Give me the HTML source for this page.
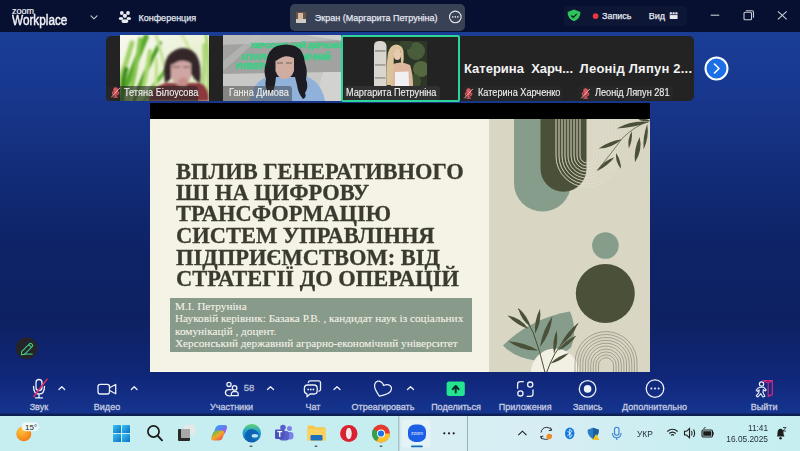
<!DOCTYPE html>
<html><head><meta charset="utf-8">
<style>
*{margin:0;padding:0;box-sizing:border-box}
html,body{width:800px;height:451px;overflow:hidden;font-family:"Liberation Sans",sans-serif}
body{position:relative;background:#c6eef0}
#bg{left:0;top:32px;width:800px;height:384px;background:linear-gradient(180deg,#1a3d95 0%,#18388f 15%,#132d7a 35%,#0e2367 55%,#0d2162 75%,#10277a 90%,#15348e 99%,#15348e 99.2%,#0d2052 99.5%,#0d2052 100%)}
.a{position:absolute}
.t{position:absolute;white-space:nowrap;line-height:1}
#top{left:0;top:0;width:800px;height:32px;background:#071030}
#strip{left:106px;top:36px;width:588px;height:65px;background:#232323;border-radius:5px;overflow:hidden}
#slide{left:150px;top:103px;width:500px;height:269px;background:#000;overflow:hidden}
#tb{left:0;top:416px;width:800px;height:35px;background:#c6eef0}
.s9{font-size:9px;color:#e4e7f0;-webkit-text-stroke:.25px #e4e7f0}
.lbl{position:absolute;width:100px;text-align:center;font-size:9px;color:#c6cce0;line-height:1;top:402.7px;white-space:nowrap;-webkit-text-stroke:.3px #c6cce0}
.title{position:absolute;left:175.5px;font-family:"Liberation Serif",serif;font-weight:bold;font-size:23px;line-height:1;color:#3a3a30;white-space:nowrap;transform:scaleX(.977);transform-origin:0 0;-webkit-text-stroke:.3px #3a3a30}
.info{position:absolute;left:175px;font-family:"Liberation Serif",serif;font-size:11.25px;line-height:1;color:#f6f4ea;white-space:nowrap;-webkit-text-stroke:.08px #f6f4ea}
.tl{position:absolute;background:rgba(40,40,40,.85);border-radius:3px;height:14px}
.tn{position:absolute;font-size:10px;color:#ececec;line-height:1;white-space:nowrap;-webkit-text-stroke:.15px #ececec;transform:scaleX(.915);transform-origin:0 0}
.bn{position:absolute;font-size:13px;font-weight:bold;color:#f2f2f2;line-height:1;white-space:nowrap}
</style></head><body>
<div id="bg" class="a"></div>
<!-- TOP BAR -->
<div id="top" class="a"></div>
<div class="t" style="left:12px;top:6.8px;font-size:9px;color:#eceef4;-webkit-text-stroke:.2px #eceef4">zoom</div>
<div class="t" style="left:12px;top:13.3px;font-size:14px;color:#f0f1f6;transform:scaleX(.84);transform-origin:0 0;-webkit-text-stroke:.45px #f0f1f6">Workplace</div>
<div class="t s9" style="left:138.5px;top:13.6px">Конференция</div>
<div class="a" style="left:290px;top:4px;width:175px;height:26.5px;background:#394155;border-radius:5px"></div>
<div class="t s9" style="left:314.8px;top:13.6px">Экран (Маргарита Петруніна)</div>
<div class="a" style="left:564px;top:6px;width:123px;height:20px;background:#0d1634;border-radius:4px"></div>
<div class="t s9" style="left:602px;top:12.1px">Запись</div>
<div class="t s9" style="left:648.7px;top:12.1px">Вид</div>

<!-- VIDEO STRIP -->
<div id="strip" class="a"></div>
<!-- tile1 image -->
<svg class="a" style="left:120px;top:35px" width="89" height="66" viewBox="0 0 89 66">
  <defs>
    <linearGradient id="g1" x1="0" y1="0" x2="1" y2="1"><stop offset="0" stop-color="#f6f8ee"/><stop offset=".5" stop-color="#ecf2d8"/><stop offset="1" stop-color="#d9e8b6"/></linearGradient>
    <filter id="bl1"><feGaussianBlur stdDeviation="0.9"/></filter>
  </defs>
  <rect width="89" height="66" fill="url(#g1)"/>
  <g filter="url(#bl1)" fill="none" stroke-linecap="round">
    <path d="M-2 50 Q6 30 12 8" stroke="#a3d26c" stroke-width="5"/>
    <path d="M0 66 Q12 36 26 2" stroke="#5aa92c" stroke-width="5.5"/>
    <path d="M8 66 Q16 40 20 4" stroke="#86c650" stroke-width="4"/>
    <path d="M14 66 Q22 42 40 8" stroke="#4b9b22" stroke-width="4"/>
    <path d="M20 66 Q26 44 30 16" stroke="#a7d76e" stroke-width="4"/>
    <path d="M24 66 Q34 48 54 26" stroke="#62b232" stroke-width="3.5"/>
    <path d="M32 66 Q38 48 36 24" stroke="#bfe285" stroke-width="3"/>
    <path d="M3 66 Q1 50 6 34" stroke="#3e8e1a" stroke-width="4.5"/>
    <path d="M36 0 Q40 12 44 30" stroke="#c5e39a" stroke-width="3"/>
    <path d="M62 0 Q72 16 80 44" stroke="#cfe6a4" stroke-width="3"/>
    <path d="M80 66 Q86 40 84 10" stroke="#aad774" stroke-width="3.5"/>
    <path d="M88 60 Q90 30 86 0" stroke="#98cd5e" stroke-width="2.5"/>
  </g>
  <g filter="url(#bl1)">
    <path d="M28 66 Q30 52 46 48 L80 48 Q89 52 89 66 Z" fill="#8a393c"/>
    <path d="M45 48 Q42 30 48 21 Q55 13 63 13 Q72 13 77 21 Q82 30 80 48 Q75 46 72 40 L53 40 Q50 46 45 48 Z" fill="#352829"/>
    <path d="M51 27 Q61 22 71 27 L71 42 Q68 50 61 51 Q54 50 51 42 Z" fill="#cfa6a2"/>
    <path d="M50 27 Q60 17 73 26 L72 29 Q62 22 52 30 Z" fill="#352829"/>
    <path d="M52 32 H60 M63 32 H70" stroke="#5a4848" stroke-width="1.1"/>
    <ellipse cx="63" cy="47" rx="5" ry="4.5" fill="#c48f8a"/>
  </g>
</svg>
<!-- tile2 image -->
<svg class="a" style="left:223px;top:35px" width="118" height="66" viewBox="0 0 118 66">
  <defs>
    <filter id="bl2"><feGaussianBlur stdDeviation="0.65"/></filter>
  </defs>
  <rect width="118" height="66" fill="#b9b9b7"/>
  <g filter="url(#bl2)">
    <path d="M-2 -2 L120 -2 L120 6 L-2 10 Z" fill="#bcbcba"/>
    <path d="M-2 10 L120 5 L120 37 L-2 39 Z" fill="#a2a2a1"/>
    <path d="M-2 39 L120 37 L120 68 L-2 68 Z" fill="#c8c8c6"/>
    <path d="M-2 28 L34 -2 L42 -2 L-2 38 Z" fill="#c0c0be" opacity=".5"/>
    <path d="M70 -2 L120 -2 L120 6 Z" fill="#cfcfcd"/>
    <path d="M100 37 L120 37 L120 68 L92 68 Z" fill="#d6d6d4" opacity=".7"/>
  </g>
  <g filter="url(#bl2)" font-family="Liberation Sans" font-weight="bold" fill="#3ccf86" stroke="#3ccf86" stroke-width=".6">
    <text x="0" y="0" font-size="7.2" transform="translate(28,13.2)">ХЕРСОНСЬКИЙ ДЕРЖАВНИЙ</text>
    <text x="0" y="0" font-size="8.4" transform="translate(18,24.6) scale(.85,1)">АГРАРНО-ЕКОНОМІЧНИЙ</text>
    <text x="0" y="0" font-size="8.6" transform="translate(12.5,34.2) scale(.95,1)">УНІВЕРСИТЕТ</text>
  </g>
  <g filter="url(#bl2)">
    <path d="M26 66 Q30 46 46 41 L78 40 Q98 44 102 66 Z" fill="#8fb1da"/>
    <path d="M46 58 Q41 52 43 44 Q40 36 43 28 Q45 14 54 11 Q63 8 72 11 Q81 15 82 28 Q85 36 83 44 Q86 52 82 58 Q84 62 80 64 Q75 58 74 50 L72 42 L53 42 Q52 52 50 56 Q49 60 46 58 Z" fill="#1f1d20"/>
    <path d="M52.5 23 Q61.5 19 71 23 L71 36 Q68 44 61.8 44 Q55.5 44 52.5 36 Z" fill="#cfada0"/>
    <path d="M51 24 Q58 15 66 17 Q72 18 74 25 L70 22 Q62 19 53 26 Z" fill="#1f1d20"/>
    <path d="M54 28 H60 M63 28 H69" stroke="#6a5a55" stroke-width=".9"/>
  </g>
</svg>
<!-- tile3 border + image -->
<div class="a" style="left:340.5px;top:35px;width:119px;height:66.5px;border:2px solid #2fd49b;border-radius:2px"></div>
<svg class="a" style="left:374px;top:41px" width="53" height="45" viewBox="0 0 53 45">
  <defs><filter id="bl3"><feGaussianBlur stdDeviation="0.7"/></filter></defs>
  <rect width="53" height="45" fill="#2c3526"/>
  <g filter="url(#bl3)">
    <circle cx="42" cy="10" r="9" fill="#4a5c3b"/>
    <circle cx="47" cy="28" r="8" fill="#55683f"/>
    <circle cx="40" cy="40" r="7" fill="#3f5032"/>
    <circle cx="32" cy="3" r="6" fill="#36442d"/>
    <path d="M0 5 Q0 0 6 0 Q12 0 12.5 5 L12.5 45 L0 45 Z" fill="#d8d6ce"/>
    <rect x="1" y="9" width="10.5" height="1.8" fill="#9a988f"/>
    <rect x="1" y="23" width="10.5" height="1.8" fill="#a3a199"/>
    <rect x="1" y="36" width="10.5" height="1.8" fill="#a3a199"/>
    <path d="M17 24 Q26 19 36 24 Q39 32 39 45 L17 45 Q15 32 17 24 Z" fill="#dcb79e"/>
    <path d="M21 31 L34.5 30.5 L35 45 L21 45 Z" fill="#f0f0f3"/>
    <path d="M12.5 44 Q12 26 14 12 Q16 4 22 3.5 Q28 3.5 29.5 10 Q30.5 18 28.5 26 L27 21 L26.5 10 L20 10 L19.5 30 Q19 40 17.5 44 Z" fill="#dcc39b"/>
    <ellipse cx="23.3" cy="13.5" rx="3.8" ry="5.5" fill="#e8c9b2"/>
  </g>
</svg>
<!-- labels -->
<div class="tl" style="left:106px;top:86px;width:92px;height:15px;border-radius:0 3px 0 0;background:rgba(40,40,40,.62)"></div>
<div class="tn" style="left:124.4px;top:88.1px">Тетяна Білоусова</div>
<div class="tl" style="left:223px;top:86px;width:69px;height:15px;border-radius:0 3px 0 0;background:rgba(50,50,50,.45)"></div>
<div class="tn" style="left:228.6px;top:88.2px">Ганна Димова</div>
<div class="tl" style="left:344px;top:86px;width:95.5px;height:14px;background:rgba(50,50,50,.9)"></div>
<div class="tn" style="left:345.8px;top:88.2px">Маргарита Петруніна</div>
<div class="bn" style="left:464px;top:61.5px">Катерина&nbsp; Харч...</div>
<div class="tl" style="left:462.5px;top:86px;width:99px"></div>
<div class="tn" style="left:477.5px;top:88.2px">Катерина Харченко</div>
<div class="bn" style="left:579.6px;top:61.5px;letter-spacing:.22px">Леонід Ляпун 2...</div>
<div class="tl" style="left:578.5px;top:86px;width:94.5px"></div>
<div class="tn" style="left:595px;top:88.2px">Леонід Ляпун 281</div>
<!-- muted mic icons in tiles -->
<svg class="a" style="left:110px;top:87px" width="11" height="11" viewBox="0 0 11 11"><g stroke="#e0585c" fill="none" stroke-width="1.2" stroke-linecap="round"><rect x="3.9" y="0.8" width="3.4" height="5.8" rx="1.7" fill="#e0585c"/><path d="M2.4 5 Q2.4 8.2 5.6 8.2 Q8.8 8.2 8.8 5"/><path d="M5.6 8.2 V10.2 M3.8 10.2 H7.4"/></g><path d="M1.6 10 L9.6 1.2" stroke="#f0a8aa" stroke-width="1" stroke-linecap="round"/></svg>
<svg class="a" style="left:463px;top:88px" width="11" height="11" viewBox="0 0 11 11"><g stroke="#e0585c" fill="none" stroke-width="1.2" stroke-linecap="round"><rect x="3.9" y="0.8" width="3.4" height="5.8" rx="1.7" fill="#e0585c"/><path d="M2.4 5 Q2.4 8.2 5.6 8.2 Q8.8 8.2 8.8 5"/><path d="M5.6 8.2 V10.2 M3.8 10.2 H7.4"/></g><path d="M1.6 10 L9.6 1.2" stroke="#f0a8aa" stroke-width="1" stroke-linecap="round"/></svg>
<svg class="a" style="left:580px;top:88px" width="11" height="11" viewBox="0 0 11 11"><g stroke="#e0585c" fill="none" stroke-width="1.2" stroke-linecap="round"><rect x="3.9" y="0.8" width="3.4" height="5.8" rx="1.7" fill="#e0585c"/><path d="M2.4 5 Q2.4 8.2 5.6 8.2 Q8.8 8.2 8.8 5"/><path d="M5.6 8.2 V10.2 M3.8 10.2 H7.4"/></g><path d="M1.6 10 L9.6 1.2" stroke="#f0a8aa" stroke-width="1" stroke-linecap="round"/></svg>
<!-- next arrow -->
<svg class="a" style="left:704px;top:56px" width="25" height="25" viewBox="0 0 25 25"><circle cx="12.5" cy="12.5" r="11" fill="#1d6fe6" stroke="#fff" stroke-width="2"/><path d="M10.5 8 L15 12.5 L10.5 17" fill="none" stroke="#fff" stroke-width="1.6" stroke-linecap="round" stroke-linejoin="round"/></svg>

<!-- SLIDE -->
<div id="slide" class="a">
  <div class="a" style="left:0;top:15.5px;width:339px;height:253.5px;background:#f5f3e5"></div>
  </div>
<div class="a" style="left:150px;top:371px;width:500px;height:1px;background:#fbfaf3;z-index:0"></div>
<!-- DECO -->
<svg class="a" style="left:489px;top:118.5px" width="161" height="253.5" viewBox="489 118.5 161 253.5">
<defs><clipPath id="darkc"><path d="M540.5 110 V168.3 A23 23 0 0 0 586.5 168.3 V110 Z"/></clipPath></defs>
<rect x="489" y="118.5" width="161" height="253.5" fill="#d9d6c4"/>
<path d="M514 110 V182.5 A28.5 28.5 0 0 0 571 182.5 V110 Z" fill="#879d8c"/>
<path d="M540.5 110 V168.3 A23 23 0 0 0 586.5 168.3 V110 Z" fill="#4b5039"/>
<path d="M580.0 110 V155.5 A7.0 7.0 0 0 0 594.0 155.5 V110 M577.0 110 V155.5 A10.0 10.0 0 0 0 597.0 155.5 V110 M574.0 110 V155.5 A13.0 13.0 0 0 0 600.0 155.5 V110 M571.0 110 V155.5 A16.0 16.0 0 0 0 603.0 155.5 V110 M568.0 110 V155.5 A19.0 19.0 0 0 0 606.0 155.5 V110 M565.0 110 V155.5 A22.0 22.0 0 0 0 609.0 155.5 V110 M562.0 110 V155.5 A25.0 25.0 0 0 0 612.0 155.5 V110 M559.0 110 V155.5 A28.0 28.0 0 0 0 615.0 155.5 V110 M556.0 110 V155.5 A31.0 31.0 0 0 0 618.0 155.5 V110" fill="none" stroke="#efece0" stroke-width="0.6" opacity="0.55"/>
<path d="M580.0 110 V155.5 A7.0 7.0 0 0 0 594.0 155.5 V110 M577.0 110 V155.5 A10.0 10.0 0 0 0 597.0 155.5 V110 M574.0 110 V155.5 A13.0 13.0 0 0 0 600.0 155.5 V110 M571.0 110 V155.5 A16.0 16.0 0 0 0 603.0 155.5 V110 M568.0 110 V155.5 A19.0 19.0 0 0 0 606.0 155.5 V110 M565.0 110 V155.5 A22.0 22.0 0 0 0 609.0 155.5 V110 M562.0 110 V155.5 A25.0 25.0 0 0 0 612.0 155.5 V110 M559.0 110 V155.5 A28.0 28.0 0 0 0 615.0 155.5 V110 M556.0 110 V155.5 A31.0 31.0 0 0 0 618.0 155.5 V110" fill="none" stroke="#e4e0c8" stroke-width="0.7" clip-path="url(#darkc)"/>
<path d="M650 120 Q634 126 622 138 Q612 152 597 170" fill="none" stroke="#4b5039" stroke-width="0.7"/>
<path d="M649.4 121.5 Q632.0 119.4 616.7 128.0 Q633.5 127.2 649.4 121.5Z" fill="#4b5039"/>
<path d="M621.7 138.8 Q609.1 140.7 598.6 148.0 Q612.0 148.0 621.7 138.8Z" fill="#4b5039"/>
<path d="M631.8 130.8 Q627.0 138.8 628.9 148.0 Q632.7 139.8 631.8 130.8Z" fill="#4b5039"/>
<path d="M639.7 136.6 Q633.5 148.5 635.0 161.8 Q642.7 150.2 639.7 136.6Z" fill="#4b5039"/>
<path d="M647.3 123.4 Q642.6 135.8 643.6 149.0 Q649.3 136.8 647.3 123.4Z" fill="#4b5039"/>
<path d="M616.0 152.5 Q615.1 161.5 621.0 168.3 Q620.9 159.6 616.0 152.5Z" fill="#4b5039"/>
<path d="M614.5 156.8 Q603.0 160.0 597.2 170.5 Q607.5 165.7 614.5 156.8Z" fill="#4b5039"/>
<path d="M638.0 119.0 Q643.8 121.7 650.0 120.0 Q644.2 117.3 638.0 119.0Z" fill="#4b5039"/>
<circle cx="605.4" cy="245" r="13.3" fill="#879d8c"/>
<circle cx="605.3" cy="293" r="29.5" fill="#4b5039"/>
<path d="M503 345 Q530 318 570 311 Q578 330 571 347 Q556 361 535 360 Q514 357 503 345 Z" fill="#879d8c"/>
<circle cx="555" cy="372" r="24" fill="#f2f0e3"/>
<path d="M598.5 380 V364.7 A7.5 7.5 0 0 1 613.5 364.7 V380 M595.9 380 V364.4 A10.1 10.1 0 0 1 616.1 364.4 V380 M593.3 380 V364.1 A12.7 12.7 0 0 1 618.7 364.1 V380 M590.7 380 V363.8 A15.3 15.3 0 0 1 621.3 363.8 V380 M588.1 380 V363.5 A17.9 17.9 0 0 1 623.9 363.5 V380 M585.5 380 V363.2 A20.5 20.5 0 0 1 626.5 363.2 V380 M582.8 380 V363.0 A23.2 23.2 0 0 1 629.2 363.0 V380 M580.2 380 V362.7 A25.8 25.8 0 0 1 631.8 362.7 V380 M577.6 380 V362.4 A28.4 28.4 0 0 1 634.4 362.4 V380 M575.0 380 V362.1 A31.0 31.0 0 0 1 637.0 362.1 V380" fill="none" stroke="#7d7b6c" stroke-width="0.6"/>
<path d="M545 372 Q540 350 533 331.6 Q526 318 518.3 308.3 M546.6 372 Q550 362 555 353 Q566 336 578 323" fill="none" stroke="#4b5039" stroke-width="1"/>
<path d="M528.3 328.3 Q520.7 317.3 507.5 315.0 Q516.2 324.3 528.3 328.3Z" fill="#4b5039"/>
<path d="M530.8 326.6 Q527.4 315.2 518.3 307.5 Q520.8 319.5 530.8 326.6Z" fill="#4b5039"/>
<path d="M535.0 333.3 Q541.9 321.7 540.0 308.3 Q534.1 320.1 535.0 333.3Z" fill="#4b5039"/>
<path d="M540.0 346.6 Q550.8 333.1 552.4 315.8 Q542.5 329.7 540.0 346.6Z" fill="#4b5039"/>
<path d="M538.3 350.0 Q524.4 341.9 508.3 340.8 Q521.6 350.8 538.3 350.0Z" fill="#4b5039"/>
<path d="M554.0 353.3 Q558.9 342.0 556.6 330.0 Q551.7 341.3 554.0 353.3Z" fill="#4b5039"/>
<path d="M560.0 345.0 Q572.6 336.6 578.2 322.5 Q566.4 331.6 560.0 345.0Z" fill="#4b5039"/>
<path d="M558.0 350.0 Q569.5 345.3 576.5 335.0 Q565.0 339.7 558.0 350.0Z" fill="#4b5039"/>
<path d="M550.0 363.2 Q561.1 360.6 569.0 352.4 Q557.9 355.0 550.0 363.2Z" fill="#4b5039"/>
</svg>
<!-- /DECO -->
<div class="title" style="top:159.8px">ВПЛИВ ГЕНЕРАТИВНОГО</div>
<div class="title" style="top:181.1px">ШІ НА ЦИФРОВУ</div>
<div class="title" style="top:202.4px">ТРАНСФОРМАЦІЮ</div>
<div class="title" style="top:224.0px">СИСТЕМ УПРАВЛІННЯ</div>
<div class="title" style="top:245.5px">ПІДПРИЄМСТВОМ: ВІД</div>
<div class="title" style="top:266.9px">СТРАТЕГІЇ ДО ОПЕРАЦІЙ</div>
<div class="a" style="left:169.5px;top:297.6px;width:302.5px;height:54px;background:#889a89"></div>
<div class="info" style="top:300.6px">М.І. Петруніна</div>
<div class="info" style="top:313.1px">Науковій керівник: Базака Р.В. , кандидат наук із соціальних</div>
<div class="info" style="top:325.7px">комунікацій , доцент.</div>
<div class="info" style="top:338.2px">Херсонський державний аграрно-економічний університет</div>

<!-- TOOLBAR LABELS -->
<div class="lbl" style="left:-11.1px">Звук</div>
<div class="lbl" style="left:57px">Видео</div>
<div class="lbl" style="left:181.6px">Участники</div>
<div class="t" style="left:243.8px;top:383.4px;font-size:9.5px;color:#b4bcd4;-webkit-text-stroke:.3px #b4bcd4">58</div>
<div class="lbl" style="left:263px">Чат</div>
<div class="lbl" style="left:333px">Отреагировать</div>
<div class="lbl" style="left:406px">Поделиться</div>
<div class="lbl" style="left:475.2px">Приложения</div>
<div class="lbl" style="left:537.7px">Запись</div>
<div class="lbl" style="left:604.5px">Дополнительно</div>
<div class="lbl" style="left:714.2px">Выйти</div>

<!-- TASKBAR -->
<div id="tb" class="a"></div>
<div class="a" style="left:399px;top:416px;width:401px;height:35px;background:linear-gradient(90deg,#d8eef3 0%,#d6eef3 40%,#c8eef1 75%,#c6eef0 100%)"></div>
<div class="t" style="left:636.5px;top:430.1px;font-size:9px;color:#1f2a33;transform:scaleX(.93);transform-origin:0 0">УКР</div>
<div class="t" style="left:668px;width:100px;text-align:right;top:423.5px;font-size:9px;color:#1f2a33;transform:scaleX(.92);transform-origin:100% 0">11:41</div>
<div class="t" style="left:668px;width:100px;text-align:right;top:435px;font-size:9px;color:#1f2a33;transform:scaleX(.925);transform-origin:100% 0">16.05.2025</div>
<!-- ICONS -->
<!-- TOP ICONS -->
<svg class="a" style="left:0;top:0" width="800" height="32" viewBox="0 0 800 32">
  <path d="M91 15.8 L94 18.8 L97 15.8" fill="none" stroke="#c9cdd8" stroke-width="1.1" stroke-linecap="round"/>
  <g fill="#e8eaf0">
    <circle cx="121.8" cy="13" r="1.9"/><circle cx="128" cy="13" r="1.9"/><circle cx="124.9" cy="15.8" r="2.1"/>
    <ellipse cx="121" cy="18.5" rx="2.3" ry="1.5"/><ellipse cx="128.8" cy="18.5" rx="2.3" ry="1.5"/>
    <ellipse cx="124.9" cy="21.2" rx="3.4" ry="1.9"/>
  </g>
  <rect x="296" y="12" width="10" height="11" fill="#6b5446"/>
  <rect x="298" y="13" width="5" height="9" fill="#d9b9a0"/>
  <rect x="296" y="19" width="10" height="4" fill="#cfcac4"/>
  <circle cx="455.3" cy="16.9" r="5.8" fill="none" stroke="#e6e8ee" stroke-width="1.1"/>
  <circle cx="452.8" cy="16.9" r=".8" fill="#e6e8ee"/><circle cx="455.3" cy="16.9" r=".8" fill="#e6e8ee"/><circle cx="457.8" cy="16.9" r=".8" fill="#e6e8ee"/>
  <path d="M574 9.6 L580.4 12 Q580.6 18.5 574 21.2 Q567.4 18.5 567.6 12 Z" fill="#2fc35c"/>
  <path d="M571.3 15.5 L573.3 17.5 L576.8 13.8" fill="none" stroke="#0c1a16" stroke-width="1.2"/>
  <circle cx="595.6" cy="16.1" r="2.9" fill="#e8383a"/>
  <g fill="#e8eaf0"><rect x="669.7" y="12.3" width="7.9" height="6.6" rx=".6"/></g>
  <g stroke="#0d1634" stroke-width=".7"><path d="M669.5 14.6 H678 M672.3 12 V14.6 M675 12 V14.6"/></g>
  <path d="M710.7 15.2 H719.3" stroke="#c9ccd6" stroke-width="1.1"/>
  <rect x="744" y="12.2" width="7.5" height="7.5" rx="1" fill="none" stroke="#c9ccd6" stroke-width="1.1"/>
  <path d="M746 10.8 H752 Q753.5 10.8 753.5 12.3 V17.8" fill="none" stroke="#c9ccd6" stroke-width="1.1"/>
  <path d="M777.9 11.3 L786.7 19.3 M786.7 11.3 L777.9 19.3" stroke="#c9ccd6" stroke-width="1.1"/>
</svg>
<!-- PENCIL -->
<svg class="a" style="left:15px;top:337px" width="24" height="24" viewBox="0 0 24 24">
  <circle cx="11.7" cy="11.2" r="11" fill="#25242b"/>
  <path d="M6.6 14.6 L14.4 6.8 Q15.5 5.8 16.6 6.8 L17.2 7.4 Q18.2 8.5 17.2 9.6 L9.4 17.4 L6.5 17.6 Z M13.6 7.6 L16.4 10.4" fill="none" stroke="#3fcf82" stroke-width="1.1" stroke-linejoin="round"/>
  <path d="M9.2 17.1 H17.6" stroke="#3fcf82" stroke-width="1.1"/>
</svg>
<!-- TOOLBAR ICONS -->
<svg class="a" style="left:0;top:372px" width="800" height="42" viewBox="0 372 800 42">
  <g fill="none" stroke="#eef1f8" stroke-width="1.3" stroke-linecap="round" stroke-linejoin="round">
    <rect x="36" y="379.5" width="6" height="11" rx="3"/>
    <path d="M33.5 386.5 Q33.5 394 39 394 Q44.5 394 44.5 386.5 M39 394 V397.5 M35.5 397.8 H42.5"/>
    <path d="M59 389.5 L61.8 386.8 L64.6 389.5 M131.4 389.5 L134.2 386.8 L137 389.5 M267.5 389.5 L270.5 386.8 L273.5 389.5 M334 389.5 L337 386.8 L340 389.5 M407.5 389.5 L410.5 386.8 L413.5 389.5"/>
    <rect x="98" y="384.3" width="11.5" height="9.7" rx="2.2"/>
    <path d="M109.5 387.8 L115.7 384.5 V393.8 L109.5 390.5"/>
    <circle cx="229" cy="384.4" r="2.1"/><circle cx="234.6" cy="387.9" r="2.3"/>
    <path d="M231.2 389.6 H228.6 Q225.4 389.8 225.4 392.8 Q225.6 395.6 228.6 395.8 H230.5"/>
    <path d="M231.4 395.6 H238.2 Q238.8 391.4 234.8 391.3 Q230.8 391.4 231.4 395.6 Z"/>
    <path d="M308.3 382.5 Q308.5 380.8 310.3 380.8 H318.5 Q320.5 380.8 320.5 382.8 V389.5 Q320.5 391 319 391.2"/>
    <path d="M307.5 385 H314 Q317.2 385 317.2 388.2 V390.8 Q317.2 394 314 394 H310 L307 396.7 V393.8 Q304.4 393.4 304.4 390.8 V388.2 Q304.4 385 307.5 385 Z"/>
    <path transform="translate(-1 0.7) rotate(22 383 389) scale(.95) translate(20.2 20.5)" d="M382.9 384.3 Q380 381 376.8 381.8 Q373.3 382.8 373.8 387 Q374.6 391.2 382.9 396.2 Q391.2 391.2 392 387 Q392.5 382.8 389 381.8 Q385.8 381 382.9 384.3 Z"/>
    <circle cx="530.2" cy="384.6" r="2.6"/><circle cx="520.4" cy="393.4" r="2.6"/>
    <path d="M517.6 388.3 V384.3 Q517.6 381.7 520.2 381.7 H523.3 M533 389.8 V393.8 Q533 396.4 530.4 396.4 H527.2"/>
    <circle cx="587.6" cy="388.9" r="8.3"/>
    <circle cx="655" cy="388.6" r="8.8"/>
    <circle cx="761.6" cy="384" r="2.2" stroke-width="1.2"/>
    <path d="M759.6 387.2 Q757.6 388 756.2 390.2 L757.4 391.4 L759.2 389.8 L758.8 392.6 L756.2 395.8 L757.9 397 L760.8 393.7 L762.9 397 L764.9 396.2 L763 392.4 L763.3 389.6 L765.3 391 L766.2 389.8 L763.6 387.2 Z" stroke-width="1.1"/>
  </g>
  <g fill="#eef1f8"><circle cx="308.2" cy="389.5" r=".9"/><circle cx="310.8" cy="389.5" r=".9"/><circle cx="313.4" cy="389.5" r=".9"/>
    <circle cx="587.6" cy="388.9" r="3.8"/>
    <circle cx="651.4" cy="388.6" r="1"/><circle cx="655" cy="388.6" r="1"/><circle cx="658.6" cy="388.6" r="1"/></g>
  <path d="M33.8 396.5 L47 379.2" stroke="#e22a63" stroke-width="1.5" stroke-linecap="round"/>
  <rect x="446.6" y="381.4" width="18.2" height="14.6" rx="2.5" fill="#24e58f"/>
  <path d="M455.7 392.5 V386.5 M452.8 389.2 L455.7 386 L458.6 389.2" fill="none" stroke="#0d2a2a" stroke-width="2" stroke-linecap="round" stroke-linejoin="round"/>
  <path d="M763 380.6 H772.3 V394.6 L768.2 396.4 V383 Z M768.2 383 L772.3 380.6" fill="none" stroke="#d02a80" stroke-width="1.2" stroke-linejoin="round"/>
</svg>
<!-- TASKBAR ICONS -->
<svg class="a" style="left:0;top:415px" width="800" height="36" viewBox="0 415 800 36">
  <defs>
    <radialGradient id="sun" cx=".35" cy=".3" r=".8"><stop offset="0" stop-color="#ffc23a"/><stop offset="1" stop-color="#f07810"/></radialGradient>
    <linearGradient id="win" x1="0" y1="0" x2="1" y2="1"><stop offset="0" stop-color="#3cc4f0"/><stop offset="1" stop-color="#0a6fc8"/></linearGradient>
    <linearGradient id="edge" x1="0" y1="0" x2="1" y2="1"><stop offset="0" stop-color="#35c1f1"/><stop offset=".5" stop-color="#1d87d5"/><stop offset="1" stop-color="#0c59a4"/></linearGradient>
    <linearGradient id="cop" x1="0" y1="0" x2="1" y2="1"><stop offset="0" stop-color="#3fbf6a"/><stop offset=".5" stop-color="#f5a623"/><stop offset="1" stop-color="#e8465a"/></linearGradient><linearGradient id="cop2" x1="0" y1="0" x2="1" y2="1"><stop offset="0" stop-color="#2aa8f0"/><stop offset=".6" stop-color="#7a6cf0"/><stop offset="1" stop-color="#e04ad0"/></linearGradient>
  </defs>
  <circle cx="23.8" cy="433.8" r="7.5" fill="url(#sun)"/>
  <rect x="21.5" y="422.3" width="17" height="9" rx="4.5" fill="#eef8f8"/>
  <g fill="url(#win)"><rect x="113" y="425" width="8" height="8" rx=".6"/><rect x="122" y="425" width="8" height="8" rx=".6"/><rect x="113" y="434" width="8" height="8" rx=".6"/><rect x="122" y="434" width="8" height="8" rx=".6"/></g>
  <circle cx="153.5" cy="431.5" r="5.6" fill="none" stroke="#1b1b1b" stroke-width="1.7"/>
  <path d="M157.6 435.6 L162 440.3" stroke="#1b1b1b" stroke-width="1.9" stroke-linecap="round"/>
  <rect x="184" y="425" width="11" height="10" rx="1" fill="#e8e8e8"/>
  <rect x="178" y="429" width="12" height="12" rx="1" fill="#2a2a2a"/>
  <rect x="181" y="429" width="9" height="9" fill="#a8a8a8"/>
  <g transform="skewX(-18)"><rect x="354.5" y="425" width="11.5" height="10" rx="3.5" fill="url(#cop2)"/></g>
  <g transform="skewX(-18)"><rect x="353.5" y="430.6" width="11.5" height="10" rx="3.5" fill="url(#cop)"/></g>
  <defs><linearGradient id="edg" x1="0" y1="0" x2="0" y2="1"><stop offset="0" stop-color="#5fd36a"/><stop offset=".45" stop-color="#1fa0d8"/><stop offset="1" stop-color="#0b5ba8"/></linearGradient></defs>
  <circle cx="251.8" cy="433.2" r="9.2" fill="url(#edg)"/>
  <path d="M248 441.5 Q243 437 246 432 Q249 428 254 429.5 Q259 431.5 258.5 435 L252 435 Q250.5 438 254 440 Q251 441.5 248 441.5 Z" fill="#0d63b4"/>
  <ellipse cx="254.8" cy="435.8" rx="3.2" ry="1.8" fill="#bfe6f0"/>
  <circle cx="289.5" cy="428.5" r="2.5" fill="#7b83eb"/><rect x="284.5" y="432" width="9" height="7.5" rx="3" fill="#7b83eb"/>
  <circle cx="283" cy="427.5" r="2.8" fill="#5b5fc7"/><rect x="279" y="431" width="10" height="9.5" rx="3" fill="#5b5fc7"/>
  <rect x="275" y="429.5" width="9.5" height="9.5" rx="1.2" fill="#4b53bc"/>
  <path d="M277.3 431.7 H282.2 M279.75 431.7 V437" stroke="#fff" stroke-width="1.3"/>
  <path d="M307.5 427 Q307.5 425.6 309 425.6 H313.5 L315 427.3 H324 Q325.6 427.3 325.6 429 V439 Q325.6 440.6 324 440.6 H309 Q307.5 440.6 307.5 439 Z" fill="#f7c64a"/>
  <rect x="307.5" y="429" width="18.1" height="11.6" rx="1.2" fill="#fbd25e"/>
  <rect x="310.5" y="435" width="12" height="5.6" rx="1" fill="#1e6fc0"/>
  <ellipse cx="348.8" cy="433.5" rx="8.7" ry="8.5" fill="#e0202e"/>
  <ellipse cx="348.8" cy="433.5" rx="3.4" ry="6.2" fill="#fbe4e6"/>
  <ellipse cx="348.8" cy="433.5" rx="3.4" ry="6.2" fill="none" stroke="#a8101c" stroke-width=".8"/>
  <circle cx="381" cy="433.5" r="9" fill="#e33b2e"/>
  <path d="M381 433.5 L373.2 429 A9 9 0 0 0 376.5 441.3 Z" fill="#2ea44f"/>
  <path d="M381 433.5 L376.5 441.3 A9 9 0 0 0 390 433.5 Z" fill="#fbc02d"/>
  <circle cx="381" cy="433.5" r="4" fill="#fff"/><circle cx="381" cy="433.5" r="3.1" fill="#1a73e8"/>
  <g fill="#55606a"><rect x="249.5" y="445.5" width="3" height="1.6" rx=".8"/><rect x="314.5" y="445.5" width="3" height="1.6" rx=".8"/><rect x="379.5" y="445.5" width="3" height="1.6" rx=".8"/></g>
  <path d="M398.8 416 V451 M467.5 416 V451" stroke="#8d9ea2" stroke-width=".8"/>
  <rect x="401.9" y="419.4" width="28.7" height="28.1" rx="3" fill="#e6f3f6"/>
  <rect x="408" y="424.4" width="18" height="17.5" rx="7" fill="#1b5fe6"/>
  <text x="417" y="435.2" font-family="Liberation Sans" font-size="5" fill="#e8efff" text-anchor="middle">zoom</text>
  <rect x="411" y="445.5" width="11.8" height="1.8" rx=".9" fill="#0f6db8"/>
  <g fill="#1c1c1c"><circle cx="444.3" cy="433.3" r="1.1"/><circle cx="449" cy="433.3" r="1.1"/><circle cx="453.7" cy="433.3" r="1.1"/></g>
  <path d="M518.3 435.2 L522.4 431.2 L526.5 435.2" fill="none" stroke="#1c1c1c" stroke-width="1.1"/>
  <path d="M541 432.5 Q542 427.5 546.5 427.3 Q550 427.3 551.5 430 M550.5 427.5 L551.7 430.3 L548.8 430.6 M551.5 435 Q550 439.5 545.5 439.4 Q542 439.3 540.8 436.8 M541.7 439.2 L540.6 436.5 L543.4 436.2" fill="none" stroke="#333" stroke-width="1"/>
  <circle cx="549.2" cy="436.5" r="2.7" fill="#f28b1c"/>
  <ellipse cx="569.7" cy="433.4" rx="4.7" ry="5.8" fill="#1479e0"/>
  <path d="M567.5 431 L572 435.5 L569.7 437.5 V429.3 L572 431.3 L567.5 435.8" fill="none" stroke="#fff" stroke-width=".8"/>
  <path d="M593 427.8 L598.8 429.8 Q599 436 593 439.2 Q587.2 436 587.6 429.8 Z" fill="#2a7fc4"/>
  <path d="M593 427.8 L598.8 429.8 Q599 436 593 439.2 Z" fill="#1a5e9e"/>
  <path d="M596 434 L599.5 440 H592.5 Z" fill="#f3c21c"/>
  <rect x="614.5" y="427.2" width="4.5" height="8" rx="2.25" fill="none" stroke="#3a7fd0" stroke-width="1.1"/>
  <path d="M612.5 433 Q612.5 437.8 616.75 437.8 Q621 437.8 621 433 M616.75 437.8 V440" fill="none" stroke="#3a7fd0" stroke-width="1.1"/>
  <g fill="none" stroke="#1c1c1c" stroke-width="1.1">
    <path d="M667.3 431.5 Q672.5 427 677.7 431.5 M669.2 433.5 Q672.5 430.7 675.8 433.5 M671 435.3 Q672.5 434 674 435.3"/>
    <path d="M684.5 431.3 H686.5 L689.5 428.5 V437.8 L686.5 435 H684.5 Z M691.5 431 Q692.8 433.2 691.5 435.5 M693.5 429.5 Q695.8 433.2 693.5 437"/>
    <rect x="702" y="430" width="10.5" height="7" rx="1.2"/>
  </g>
  <rect x="703.2" y="431.2" width="8.1" height="4.6" fill="#1c1c1c"/>
  <path d="M713 432 V435" stroke="#1c1c1c" stroke-width="1.2"/>
  <path d="M703.5 428.5 L705.5 427.5" stroke="#1c1c1c" stroke-width="1"/>
  <path d="M777 436.5 Q777.5 435 777.5 433 Q777.5 429 780.5 428.8 Q783.5 429 783.5 433 Q783.5 435 784.5 436.5 Z" fill="#1c1c1c"/>
  <circle cx="780.5" cy="438.3" r="1.2" fill="#1c1c1c"/>
  <path d="M783 427.5 H786 L783 431 H786" fill="none" stroke="#1c1c1c" stroke-width=".8"/>
</svg>
<div class="t" style="left:25px;top:423.5px;font-size:8px;color:#222">15°</div>

<!-- /ICONS -->
</body></html>
